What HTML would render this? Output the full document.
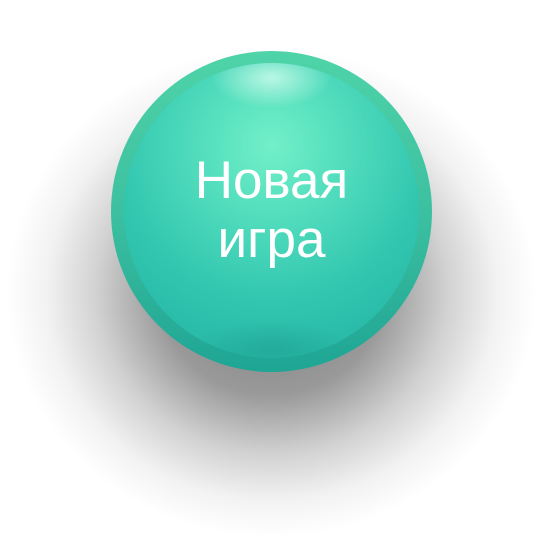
<!DOCTYPE html>
<html><head><meta charset="utf-8"><style>
html,body{margin:0;padding:0;background:#fff;width:543px;height:543px;overflow:hidden}
.s{position:absolute;left:-20px;top:0;width:583px;height:543px;
background:radial-gradient(ellipse 265px 245px at 50% 292px,rgba(0,0,0,.5) 0%,rgba(0,0,0,.4) 42%,rgba(0,0,0,.18) 66%,rgba(0,0,0,.05) 85%,rgba(0,0,0,0) 100%)}
.o{position:absolute;left:111px;top:51px;width:321px;height:321px;border-radius:50%;
background:linear-gradient(180deg,#4fd3a8 0%,#3cc0a0 50%,#1ea594 100%)}
.i{position:absolute;left:13px;top:12px;width:295px;height:295px;border-radius:50%;
background:
radial-gradient(ellipse 60px 30px at 50% 5%,rgba(220,255,240,.75),rgba(220,255,240,0) 100%),
radial-gradient(ellipse 80px 30px at 50% 97%,rgba(20,130,120,.3),rgba(20,130,120,0) 100%),
radial-gradient(circle at 50% 28%,#72f0c8 0%,#50dcbc 30%,#32c6b0 60%,#20b0a0 100%);}
.t{position:absolute;left:0;top:0;width:321px;text-align:center;color:#fff;
font-family:"Liberation Sans",sans-serif;font-size:53px;line-height:59px;padding-top:100px}
</style></head><body>
<div class="s"></div>
<div class="o"><div class="i"></div><div class="t">Новая<br>игра</div></div>
</body></html>
